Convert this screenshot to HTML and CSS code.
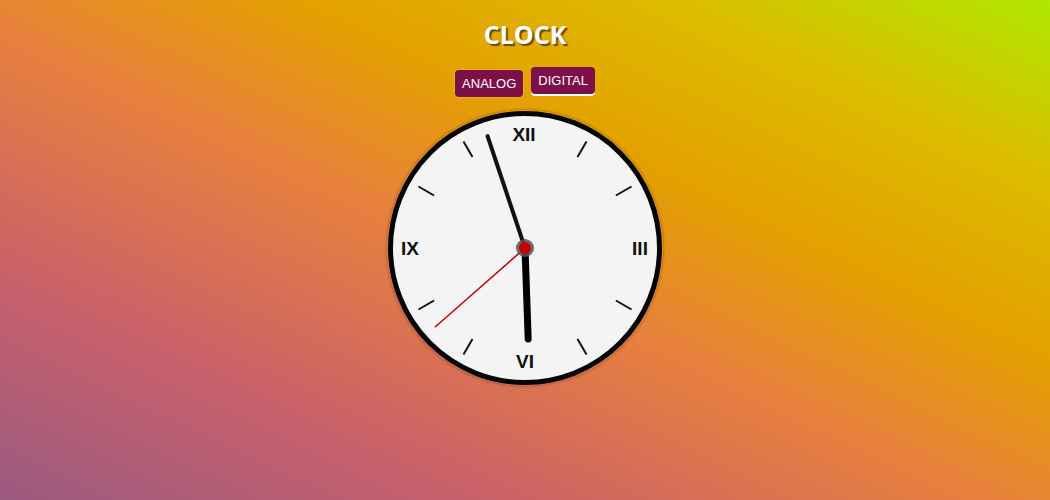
FILE: index.html
```html
<!DOCTYPE html>
<html>
<head>
<meta charset="utf-8">
<title>Clock</title>
<link rel="stylesheet" href="styles.css">
</head>
<body>
<main class="page">
  <h1 class="title">CLOCK</h1>
  <div class="modes">
    <button class="mode">ANALOG</button>
    <button class="mode active">DIGITAL</button>
  </div>
  <div class="clock">
    <svg class="face" width="276" height="276" viewBox="0 0 276 276">
      <circle cx="138" cy="138" r="134.5" fill="#f5f4f5" stroke="#050505" stroke-width="5"/>
      <g stroke="#111" stroke-width="2" stroke-linecap="butt">
        <line x1="138" y1="33" x2="138" y2="15" transform="rotate(30 138 138)"/>
        <line x1="138" y1="33" x2="138" y2="15" transform="rotate(60 138 138)"/>
        <line x1="138" y1="33" x2="138" y2="15" transform="rotate(120 138 138)"/>
        <line x1="138" y1="33" x2="138" y2="15" transform="rotate(150 138 138)"/>
        <line x1="138" y1="33" x2="138" y2="15" transform="rotate(210 138 138)"/>
        <line x1="138" y1="33" x2="138" y2="15" transform="rotate(240 138 138)"/>
        <line x1="138" y1="33" x2="138" y2="15" transform="rotate(300 138 138)"/>
        <line x1="138" y1="33" x2="138" y2="15" transform="rotate(330 138 138)"/>
      </g>
      <g class="nums">
        <text x="137" y="31">XII</text>
        <text x="253" y="145">III</text>
        <text x="138" y="258">VI</text>
        <text x="23" y="145">IX</text>
      </g>
      <line x1="138" y1="138" x2="138" y2="47" stroke="#000" stroke-width="7" stroke-linecap="round" transform="rotate(178 138 138)"/>
      <line x1="138" y1="138" x2="138" y2="20" stroke="#111" stroke-width="4" stroke-linecap="round" transform="rotate(341.5 138 138)"/>
      <line x1="138" y1="138" x2="138" y2="18" stroke="#c40000" stroke-width="1.5" transform="rotate(228.7 138 138)"/>
      <circle cx="138" cy="138" r="9" fill="#555" opacity="0.85"/>
      <circle cx="138" cy="138" r="6" fill="#c80000"/>
    </svg>
  </div>
</main>
</body>
</html>
```
FILE: styles.css
```css
html, body {
  margin: 0;
  padding: 0;
  height: 100%;
}
body {
  background: linear-gradient(to top right, #9a5a80 0%, #c8606c 22%, #e8803e 47%, #e4a000 64%, #dcbc00 82%, #b0e800 100%);
  font-family: "Liberation Sans", Arial, sans-serif;
  overflow: hidden;
}
.page {
  display: flex;
  flex-direction: column;
  align-items: center;
  min-height: 500px;
}
.title {
  margin: 17px 0 0;
  font-family: "Open Sans", sans-serif;
  font-weight: 700;
  font-size: 25px;
  line-height: 34px;
  color: #fff;
  text-shadow: 2px 2px 1px #6a4a10;
}
.modes {
  display: flex;
  align-items: flex-end;
  gap: 8px;
  margin-top: 19px;
}
.mode {
  font-family: "Liberation Sans", Arial, sans-serif;
  font-size: 13px;
  line-height: 15px;
  color: #fff;
  background: #7e1049;
  border: none;
  border-radius: 4px;
  padding: 6px 7px 6px;
  box-shadow: 0 0 0 1px rgba(255, 200, 60, 0.35);
}
.mode.active {
  transform: translateY(-3px);
  box-shadow: 0 2px 0 #fff;
}
.clock {
  margin-top: 13px;
  width: 276px;
  height: 276px;
  border-radius: 50%;
  box-shadow: 0 0 3px rgba(0, 0, 0, 0.4);
}
.face {
  display: block;
}
.nums text {
  font-family: "Liberation Sans", Arial, sans-serif;
  font-weight: 700;
  font-size: 19px;
  fill: #111;
  text-anchor: middle;
}
```
